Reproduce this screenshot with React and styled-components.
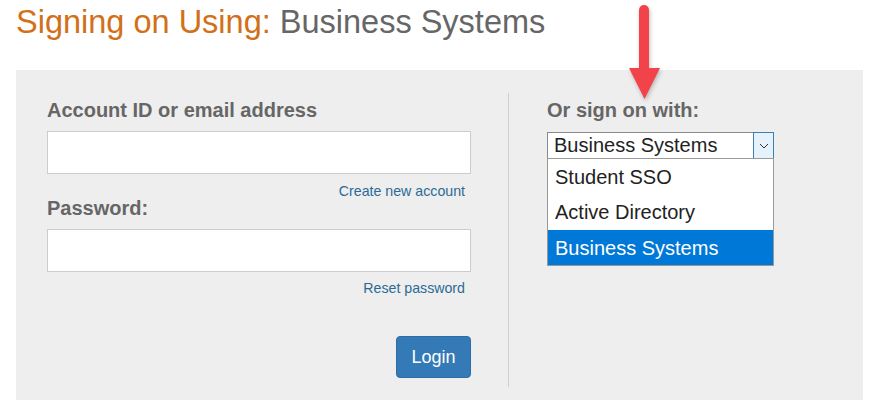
import styled, { createGlobalStyle } from "styled-components";

const GlobalStyle = createGlobalStyle`
  body {
    margin: 0;
    background: #fff;
    font-family: "Liberation Sans", Arial, sans-serif;
  }
`;

const Page = styled.div`
  position: relative;
  width: 877px;
  height: 412px;
  padding: 0 14px 0 16px;
  box-sizing: border-box;
  overflow: hidden;
`;

const Title = styled.h1`
  margin: 0;
  height: 70px;
  padding-top: 2px;
  box-sizing: border-box;
  font-size: 32.5px;
  font-weight: normal;
  line-height: 40px;
  color: #666;
`;

const Accent = styled.span`
  color: #d2701a;
`;

const Panel = styled.div`
  display: grid;
  grid-template-columns: 424px 1px 1fr;
  column-gap: 37px;
  height: 330px;
  padding: 24px 0 12px 31px;
  box-sizing: border-box;
  background: #eeeeee;
`;

const Column = styled.div`
  display: flex;
  flex-direction: column;
  padding-left: ${(p) => p.$indent || 0}px;
`;

const Label = styled.label`
  font-size: 20px;
  font-weight: bold;
  color: #666;
  line-height: 32px;
  margin-bottom: ${(p) => p.$gap || 5}px;
`;

const Input = styled.input`
  width: 424px;
  height: 43px;
  box-sizing: border-box;
  border: 1px solid #ccc;
  background: #fff;
  outline: none;
`;

const LinkRow = styled.div`
  width: 418px;
  text-align: right;
  font-size: 14.2px;
  line-height: 16px;
  margin-top: ${(p) => p.$top}px;
  margin-bottom: ${(p) => p.$bottom}px;
`;

const Link = styled.a`
  color: #2a6b96;
  text-decoration: none;
`;

const Login = styled.button`
  align-self: flex-start;
  margin-left: 349px;
  width: 75px;
  height: 42px;
  border: 1px solid #2e6da4;
  border-radius: 4px;
  background: #337ab7;
  color: #fff;
  font-family: inherit;
  font-size: 18px;
`;

const Divider = styled.div`
  margin-top: -1px;
  background: #cfcfcf;
  height: 294px;
`;

const SelectWrap = styled.div`
  position: relative;
  width: 227px;
`;

const Select = styled.div`
  display: flex;
  align-items: center;
  height: 27px;
  box-sizing: border-box;
  border: 1px solid #8a8a8a;
  background: #fff;
  font-size: 20px;
  color: #222;
  padding-left: 6px;
`;

const SelectText = styled.span`
  flex: 1;
`;

const ArrowButton = styled.span`
  display: flex;
  align-items: center;
  justify-content: center;
  width: 21px;
  height: 27px;
  margin: -1px -1px -1px 0;
  box-sizing: border-box;
  border: 1px solid #3c7fb1;
  background: #e5f1fb;
`;

const Menu = styled.ul`
  position: absolute;
  top: 26px;
  left: 0;
  width: 227px;
  margin: 0;
  padding: 0;
  list-style: none;
  box-sizing: border-box;
  border: 1px solid #999;
  background: #fff;
`;

const Option = styled.li`
  height: 35.4px;
  line-height: 37px;
  padding-left: 7px;
  font-size: 20px;
  color: ${(p) => (p.$active ? "#fff" : "#222")};
  background: ${(p) => (p.$active ? "#0078d7" : "#fff")};
`;

const Pointer = styled.svg`
  position: absolute;
  left: 625px;
  top: 2px;
  filter: drop-shadow(1px 2px 2px rgba(0, 0, 0, 0.25));
`;

export default function App() {
  return (
    <>
      <GlobalStyle />
      <Page>
        <Title>
          <Accent>Signing on Using:</Accent> Business Systems
        </Title>
        <Panel>
          <Column>
            <Label $gap={5}>Account ID or email address</Label>
            <Input type="text" />
            <LinkRow $top={9} $bottom={-7}>
              <Link href="#">Create new account</Link>
            </LinkRow>
            <Label $gap={5}>Password:</Label>
            <Input type="password" />
            <LinkRow $top={8} $bottom={40}>
              <Link href="#">Reset password</Link>
            </LinkRow>
            <Login>Login</Login>
          </Column>
          <Divider />
          <Column $indent={1}>
            <Label $gap={6}>Or sign on with:</Label>
            <SelectWrap>
              <Select>
                <SelectText>Business Systems</SelectText>
                <ArrowButton>
                  <svg width="10" height="6" viewBox="0 0 10 6">
                    <path d="M1 1l4 4 4-4" fill="none" stroke="#333" strokeWidth="1" />
                  </svg>
                </ArrowButton>
              </Select>
              <Menu>
                <Option>Student SSO</Option>
                <Option>Active Directory</Option>
                <Option $active>Business Systems</Option>
              </Menu>
            </SelectWrap>
          </Column>
        </Panel>
        <Pointer width="40" height="100" viewBox="0 0 40 100">
          <line x1="19" y1="8" x2="19" y2="70" stroke="#f2424a" strokeWidth="10" strokeLinecap="round" />
          <path d="M4 66 L35 66 L19.5 97 Z" fill="#f2424a" />
        </Pointer>
      </Page>
    </>
  );
}
